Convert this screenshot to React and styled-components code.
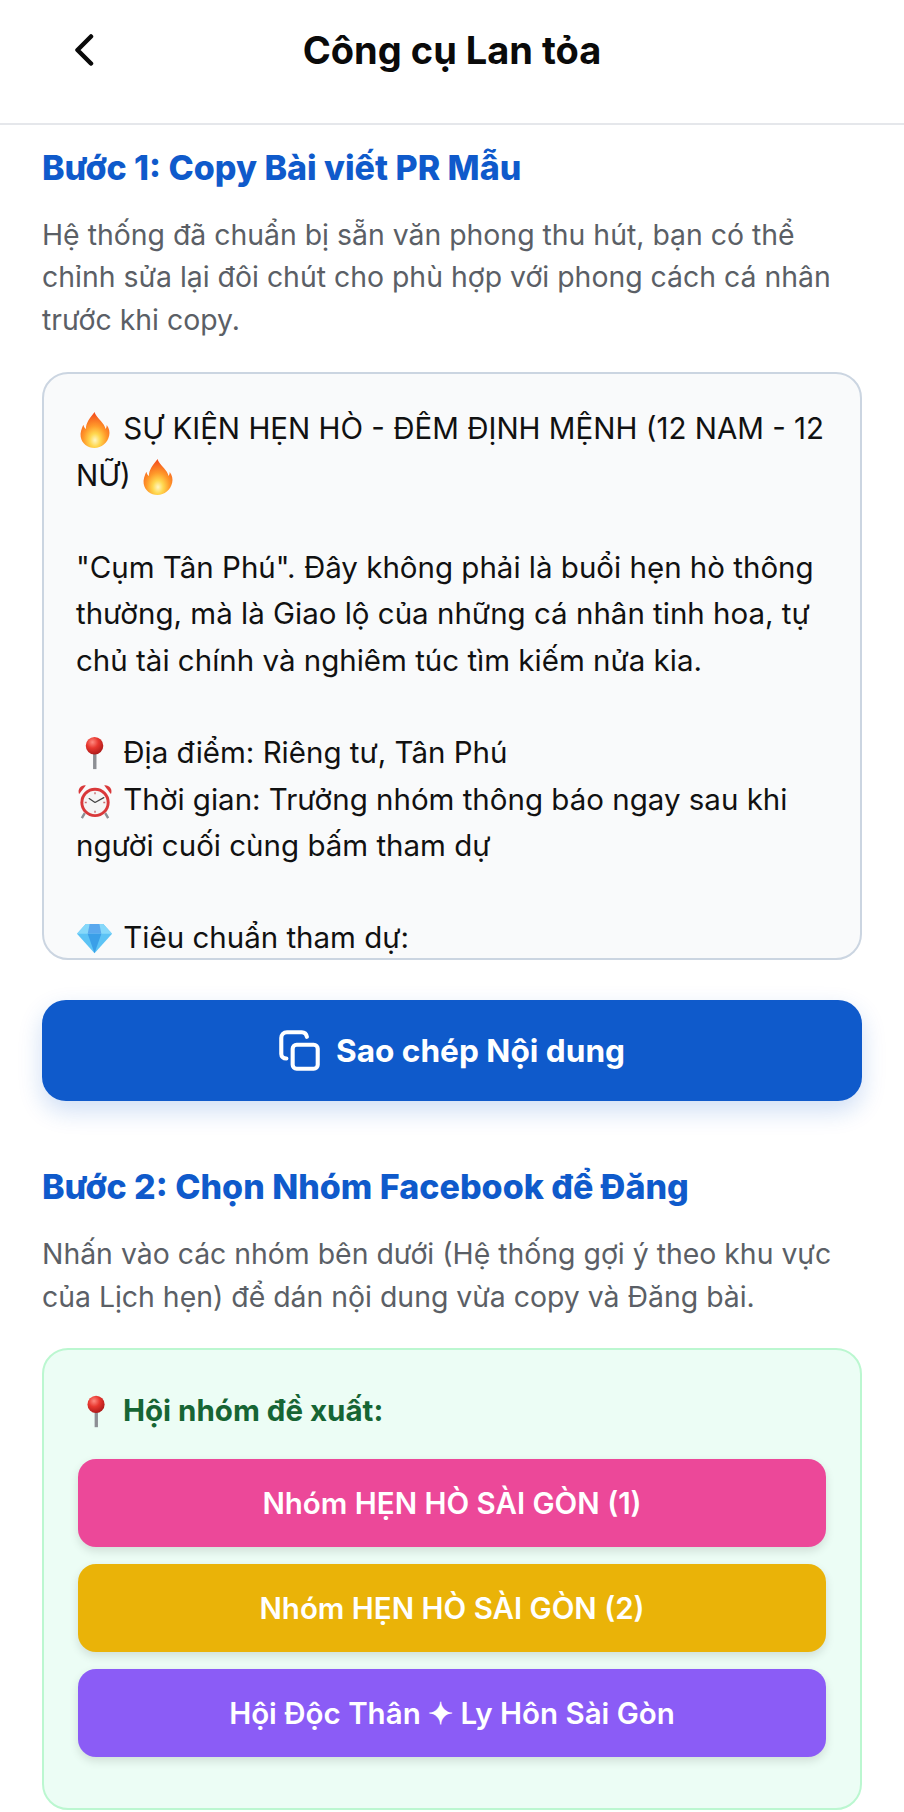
import React from "react";
import styled, { createGlobalStyle } from "styled-components";

const Global = createGlobalStyle`
  html, body { margin: 0; padding: 0; background: #fff; }
  body { font-family: Inter, "Noto Sans", "Liberation Sans", sans-serif; }
  * { box-sizing: border-box; }
`;

const Page = styled.div`
  width: 904px;
  height: 1812px;
  overflow: hidden;
  background: #fff;
`;

const Header = styled.header`
  height: 125px;
  border-bottom: 2px solid #e5e7eb;
  display: grid;
  grid-template-columns: 1fr auto 1fr;
  align-items: start;
  padding: 26px 75px 0;
`;

const BackButton = styled.button`
  border: 0;
  background: none;
  padding: 0;
  width: 20px;
  height: 48px;
  display: flex;
  align-items: center;
  justify-content: flex-start;
  color: #0a0a0a;
`;

const Title = styled.h1`
  margin: 0;
  font-size: 38px;
  line-height: 48px;
  font-weight: 700;
  color: #0a0a0a;
`;

const Main = styled.main`
  padding: 0 42px;
`;

const StepTitle = styled.h2`
  margin: ${(p) => p.$top}px 0 0;
  font-size: 34px;
  line-height: 44px;
  font-weight: 800;
  color: #0f5acb;
`;

const Note = styled.p`
  margin: 24px 0 0;
  font-size: 28.4px;
  line-height: 42.4px;
  font-weight: 400;
  color: #5b5f66;
`;

const PostBox = styled.div`
  margin-top: 31px;
  height: 588px;
  overflow: hidden;
  background: #f9fafb;
  border: 2px solid #cbd5e1;
  border-radius: 26px;
  padding: 31px 32px 0;
  font-size: 29.5px;
  line-height: 46.3px;
  color: #111;
`;

const PostLine = styled.div`
  min-height: 46.3px;
`;

const EmojiSvg = styled.svg`
  width: ${(p) => p.$size || 39}px;
  height: ${(p) => p.$size || 39}px;
  vertical-align: -10px;
`;

const CopyButton = styled.button`
  margin-top: 40px;
  width: 100%;
  height: 101px;
  border: 0;
  border-radius: 24px;
  background: #0f5acb;
  color: #fff;
  font: 700 31.6px/40px Inter, sans-serif;
  display: flex;
  align-items: center;
  justify-content: center;
  gap: 16px;
  box-shadow: 0 10px 24px rgba(15, 90, 203, 0.2);
`;

const GroupBox = styled.section`
  margin-top: 30px;
  height: 462px;
  background: #ecfdf5;
  border: 2px solid #bbf7d0;
  border-radius: 26px;
  padding: 0 34px;
`;

const GroupLabel = styled.div`
  margin-top: 37px;
  height: 46px;
  line-height: 46px;
  font-size: 29.5px;
  font-weight: 700;
  color: #166534;
`;

const GroupList = styled.div`
  margin-top: 26px;
  display: flex;
  flex-direction: column;
  gap: 17px;
`;

const GroupButton = styled.button`
  width: 100%;
  height: 88px;
  border: 0;
  border-radius: 18px;
  background: ${(p) => p.$color};
  color: #fff;
  font: 600 29.5px/40px Inter, sans-serif;
  box-shadow: 0 4px 10px rgba(0, 0, 0, 0.12);
`;

const Flame = () => (
  <EmojiSvg viewBox="0 0 40 40" aria-hidden="true">
    <defs>
      <radialGradient id="fl" cx="0.5" cy="0.78" r="0.72">
        <stop offset="0" stopColor="#fff6c4" />
        <stop offset="0.25" stopColor="#ffd84f" />
        <stop offset="0.55" stopColor="#ff9a2a" />
        <stop offset="1" stopColor="#f4511e" />
      </radialGradient>
    </defs>
    <path
      fill="url(#fl)"
      d="M19 2c1.500 5 6 8 9.500 13 1 1.500 1.500 3 1.700 4.500 1-1 1.300-2.500 1.300-4 2.500 3.500 3.500 7 2.500 11-1.500 7.500-8 12.500-15 12.500S6 34.500 4.800 27.500C4 23 6 18.500 7.500 15c.5 2 1.300 3.500 2.700 4.500C10 13 14.500 8 19 2z"
    />
  </EmojiSvg>
);

const Pin = ({ size }) => (
  <EmojiSvg viewBox="0 0 40 40" $size={size} aria-hidden="true">
    <defs>
      <radialGradient id="pn" cx="0.38" cy="0.3" r="0.75">
        <stop offset="0" stopColor="#ff8a80" />
        <stop offset="0.45" stopColor="#e8372f" />
        <stop offset="1" stopColor="#a81818" />
      </radialGradient>
    </defs>
    <rect x="17.500" y="18" width="3.500" height="18" fill="#8d8f94" />
    <circle cx="19" cy="12" r="9" fill="url(#pn)" />
  </EmojiSvg>
);

const Clock = () => (
  <EmojiSvg viewBox="0 0 40 40" aria-hidden="true">
    <g fill="#d9383a">
      <path d="M3 13c-1.500-5 2-9 7-8.500L3.500 13z" />
      <path d="M36 13c1.500-5-2-9-7-8.500l6.500 8.500z" />
    </g>
    <path d="M9 33l-3 5M30 33l3 5" stroke="#8d8f94" strokeWidth="2.500" />
    <circle cx="19.500" cy="22" r="15" fill="#d9383a" />
    <circle cx="19.500" cy="22" r="12" fill="#f5f5f5" />
    <path d="M19.500 22l-6-4M19.500 22l9-5" stroke="#444" strokeWidth="1.300" strokeLinecap="round" />
    <path d="M19.500 11.500v2M19.500 30.500v2M9 22h2M28 22h2" stroke="#c9686a" strokeWidth="1.400" />
  </EmojiSvg>
);

const Diamond = () => (
  <EmojiSvg viewBox="0 0 40 40" aria-hidden="true">
    <path d="M10 5h18l9 10-18 20L1 15z" fill="#5cc3f5" />
    <path d="M10 5h18l9 10H1z" fill="#86d8fa" />
    <path d="M12 15h14l-7 20z" fill="#3a9fe8" />
    <path d="M14 5h10l2 10H12z" fill="#5aa8ee" />
  </EmojiSvg>
);

const CopyIcon = () => (
  <svg width="41" height="41" viewBox="0 0 36 36" fill="none" stroke="#fff" strokeWidth="3.600" strokeLinecap="round" aria-hidden="true">
    <rect x="12" y="13" width="22" height="21" rx="3.500" />
    <path d="M6.500 25C3.700 25 2 23.300 2 21V7c0-3 2-5 5-5h13c2.500 0 4 1.500 4.500 4" />
  </svg>
);

const ChevronIcon = () => (
  <svg width="20" height="32" viewBox="0 0 20 32" fill="none" stroke="currentColor" strokeWidth="4.500" strokeLinecap="round" strokeLinejoin="round" aria-hidden="true">
    <path d="M16 2.500 2.500 16 16 29.500" />
  </svg>
);

const groups = [
  { color: "#ec4899", label: "Nhóm HẸN HÒ SÀI GÒN (1)" },
  { color: "#eab308", label: "Nhóm HẸN HÒ SÀI GÒN (2)" },
  { color: "#8b5cf6", label: "Hội Độc Thân ✦ Ly Hôn Sài Gòn" },
];

export default function App() {
  return (
    <Page>
      <Global />
      <Header>
        <BackButton aria-label="Quay lại">
          <ChevronIcon />
        </BackButton>
        <Title>Công cụ Lan tỏa</Title>
      </Header>
      <Main>
        <StepTitle $top={21}>Bước 1: Copy Bài viết PR Mẫu</StepTitle>
        <Note>
          Hệ thống đã chuẩn bị sẵn văn phong thu hút, bạn có thể chỉnh sửa lại đôi chút cho phù hợp với phong cách cá nhân trước khi copy.
        </Note>
        <PostBox>
          <PostLine>
            <Flame /> SỰ KIỆN HẸN HÒ - ĐÊM ĐỊNH MỆNH (12 NAM - 12 NỮ) <Flame />
          </PostLine>
          <PostLine />
          <PostLine>
            "Cụm Tân Phú". Đây không phải là buổi hẹn hò thông thường, mà là Giao lộ của những cá nhân tinh hoa, tự chủ tài chính và nghiêm túc tìm kiếm nửa kia.
          </PostLine>
          <PostLine />
          <PostLine>
            <Pin /> Địa điểm: Riêng tư, Tân Phú
          </PostLine>
          <PostLine>
            <Clock /> Thời gian: Trưởng nhóm thông báo ngay sau khi người cuối cùng bấm tham dự
          </PostLine>
          <PostLine />
          <PostLine>
            <Diamond /> Tiêu chuẩn tham dự:
          </PostLine>
        </PostBox>
        <CopyButton>
          <CopyIcon />
          Sao chép Nội dung
        </CopyButton>
        <StepTitle $top={64}>Bước 2: Chọn Nhóm Facebook để Đăng</StepTitle>
        <Note>
          Nhấn vào các nhóm bên dưới (Hệ thống gợi ý theo khu vực của Lịch hẹn) để dán nội dung vừa copy và Đăng bài.
        </Note>
        <GroupBox>
          <GroupLabel>
            <Pin size={38} /> Hội nhóm đề xuất:
          </GroupLabel>
          <GroupList>
            {groups.map((g) => (
              <GroupButton key={g.label} $color={g.color}>
                {g.label}
              </GroupButton>
            ))}
          </GroupList>
        </GroupBox>
      </Main>
    </Page>
  );
}
